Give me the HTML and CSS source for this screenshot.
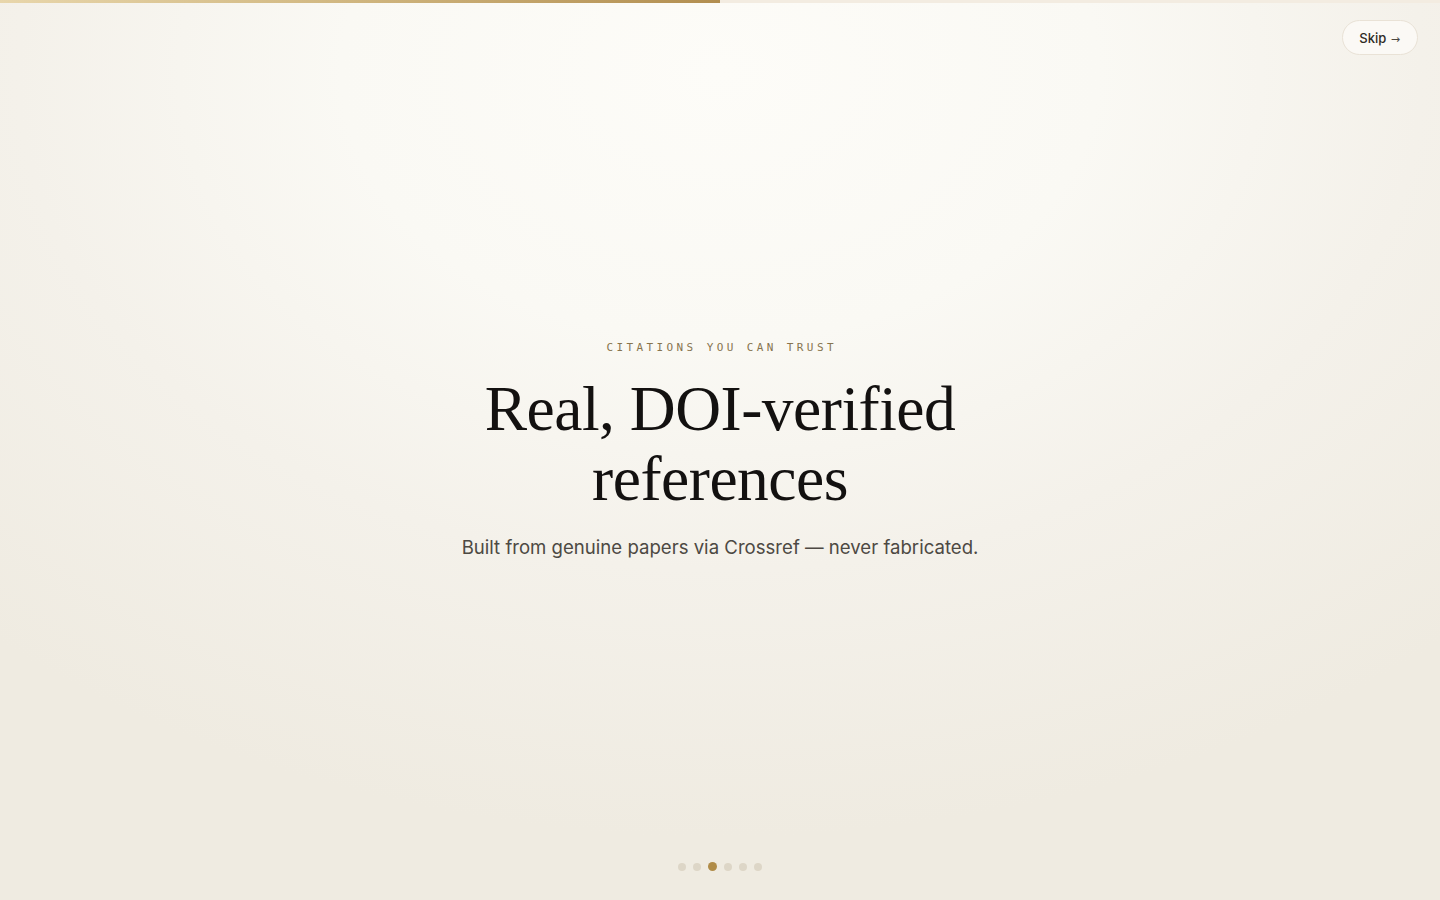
FILE: index.html
```html
<!DOCTYPE html>
<html lang="en">
<head>
<meta charset="utf-8">
<title>Citations you can trust</title>
<link rel="stylesheet" href="styles.css">
</head>
<body>
<div class="screen">
  <div class="progress"><div class="progress-fill"></div></div>
  <header class="topbar">
    <button class="skip">Skip <span class="arrow">→</span></button>
  </header>
  <main class="slide">
    <p class="eyebrow">CITATIONS YOU CAN TRUST</p>
    <h1 class="title">Real, DOI-verified<br>references</h1>
    <p class="subtitle">Built from genuine papers via Crossref — never fabricated.</p>
  </main>
  <nav class="dots">
    <span class="dot"></span>
    <span class="dot"></span>
    <span class="dot active"></span>
    <span class="dot"></span>
    <span class="dot"></span>
    <span class="dot"></span>
  </nav>
</div>
</body>
</html>
```

FILE: styles.css
```css
* { box-sizing: border-box; }
html, body { margin: 0; padding: 0; height: 100%; }
body {
  font-family: "Inter", "Open Sans", sans-serif;
  background: #efebe1;
}
.screen {
  position: relative;
  height: 900px;
  display: flex;
  flex-direction: column;
  background:
    radial-gradient(ellipse 75% 85% at 50% 8%, #fdfcf8 0%, #faf9f4 35%, #f4f1ea 65%, #efebe1 100%);
}
.progress {
  height: 3px;
  background: #f3ece1;
}
.progress-fill {
  width: 50%;
  height: 100%;
  background: linear-gradient(90deg, #e8d6ab 0%, #d2b983 45%, #b28e50 100%);
}
.topbar {
  display: flex;
  justify-content: flex-end;
  padding: 17px 22px 0 0;
}
.skip {
  font-family: "Inter", sans-serif;
  font-size: 13px;
  font-weight: 500;
  color: #2e2a24;
  background: #fbf9f5;
  border: 1px solid #e9e2d6;
  border-radius: 999px;
  height: 35px;
  padding: 0 17px 0 16px;
  cursor: pointer;
}
.skip .arrow {
  font-family: "DejaVu Sans", sans-serif;
  font-weight: 400;
  font-size: 11px;
  color: #4a4640;
  margin-left: 1px;
}
.slide {
  flex: 1;
  display: flex;
  flex-direction: column;
  align-items: center;
  text-align: center;
  padding-top: 285px;
}
.eyebrow {
  margin: 0;
  font-family: "DejaVu Sans Mono", "Liberation Mono", monospace;
  font-size: 11px;
  letter-spacing: 3.4px;
  color: #87744f;
  line-height: 16px;
  padding-left: 3.4px;
}
.title {
  margin: 18px 0 0;
  font-family: "Liberation Serif", serif;
  font-weight: 500;
  font-size: 63.5px;
  line-height: 70px;
  color: #131110;
  letter-spacing: -0.5px;
}
.subtitle {
  margin: 20px 0 0;
  font-family: "Inter", sans-serif;
  font-size: 18.6px;
  color: #4d4943;
  line-height: 26px;
}
.dots {
  display: flex;
  justify-content: center;
  align-items: center;
  gap: 7px;
  padding-bottom: 29px;
}
.dot {
  width: 8px;
  height: 8px;
  border-radius: 50%;
  background: #ddd6c7;
}
.dot.active {
  width: 9px;
  height: 9px;
  background: #b08c48;
}
```
